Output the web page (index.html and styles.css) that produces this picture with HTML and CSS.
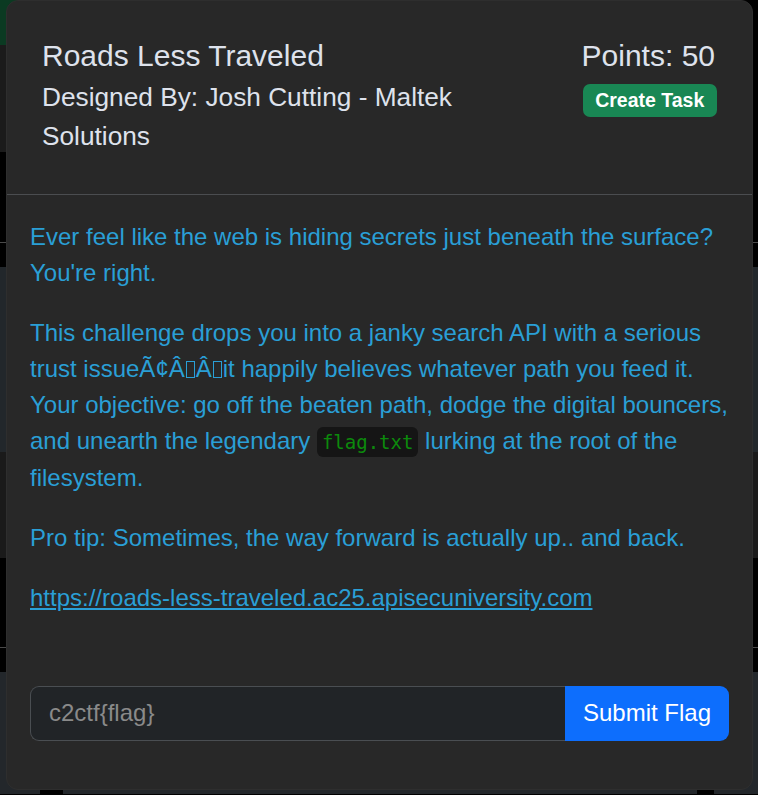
FILE: index.html
```html
<!DOCTYPE html>
<html lang="en">
<head>
<meta charset="utf-8">
<title>Roads Less Traveled</title>
<link rel="stylesheet" href="styles.css">
</head>
<body>
<div class="page">
  <div class="band band-top">
    <div class="nav-green"></div>
  </div>
  <div class="band band-2">
    <div class="left-grey"></div>
  </div>
  <div class="band band-3"></div>
  <div class="rule"></div>
  <div class="band band-4"></div>
  <div class="band band-5"></div>
  <div class="band band-6"></div>
  <div class="band band-7"></div>
  <div class="rule"></div>
  <div class="band band-8"></div>
  <div class="band band-9"></div>
  <div class="band band-10">
    <div class="gap-a"></div>
    <div class="fill"></div>
    <div class="gap-b"></div>
    <div class="fill-r"></div>
  </div>
</div>

<div class="modal">
  <div class="modal-header">
    <div class="head-left">
      <h5 class="title">Roads Less Traveled</h5>
      <div class="author">Designed By: Josh Cutting - Maltek Solutions</div>
    </div>
    <div class="head-right">
      <div class="points">Points: 50</div>
      <span class="badge">Create Task</span>
    </div>
  </div>
  <div class="modal-body">
    <p>Ever feel like the web is hiding secrets just beneath the surface? You're right.</p>
    <p>This challenge drops you into a janky search API with a serious trust issueÃ¢Â<span class="tofu"></span>Â<span class="tofu"></span>it happily believes whatever path you feed it. Your objective: go off the beaten path, dodge the digital bouncers, and unearth the legendary <code>flag.txt</code> lurking at the root of the filesystem.</p>
    <p>Pro tip: Sometimes, the way forward is actually up.. and back.</p>
    <p><a href="#">https://roads-less-traveled.ac25.apisecuniversity.com</a></p>
  </div>
  <div class="modal-footer">
    <form class="input-group">
      <input class="flag-input" type="text" placeholder="c2ctf{flag}">
      <button class="submit" type="button">Submit Flag</button>
    </form>
  </div>
</div>
</body>
</html>
```

FILE: styles.css
```css
* { box-sizing: border-box; }
html, body {
  margin: 0;
  padding: 0;
  background: #000;
  font-family: "Liberation Sans", Arial, sans-serif;
  overflow: hidden;
}
.page {
  width: 758px;
  height: 795px;
  display: flex;
  flex-direction: column;
}
.band { width: 100%; display: flex; }
.band-top { height: 45px; background: #000; }
.nav-green { width: 24px; background: #0b3a22; }
.band-2 { height: 107px; background: #000; }
.left-grey { width: 24px; background: #1b1b1b; }
.band-3 { height: 90px; background: #000; }
.rule { height: 1px; background: #4a4a4a; width: 100%; }
.band-4 { height: 24px; background: #000; }
.band-5 { height: 185px; background: #22272b; }
.band-6 { height: 106px; background: #1a1a1a; }
.band-7 { height: 89px; background: #000; }
.band-8 { height: 24px; background: #000; }
.band-9 { height: 117px; background: #23272b; }
.band-10 { height: 5px; background: #23272b; }
.band-10 .gap-a { width: 40px; }
.band-10 .fill { width: 23px; background: #000; }
.band-10 .gap-b { width: 634px; }
.band-10 .fill-r { width: 17px; background: #000; }

.modal {
  position: absolute;
  left: 6px;
  top: 0;
  width: 747px;
  height: 790px;
  background: #282828;
  border-radius: 12px;
  border: 1px solid #2e2e2e;
  display: flex;
  flex-direction: column;
}
.modal-header {
  display: flex;
  justify-content: space-between;
  align-items: flex-start;
  padding: 37px 35px 37px 35px;
  border-bottom: 1px solid #4b4d50;
}
.head-left { width: 460px; }
.title {
  margin: 0 0 4px;
  font-size: 30px;
  line-height: 36px;
  font-weight: 400;
  color: #dee2ec;
}
.author {
  font-size: 26.25px;
  line-height: 1.5;
  color: #dee2ec;
}
.head-right {
  display: flex;
  flex-direction: column;
  align-items: flex-end;
}
.points {
  font-size: 30px;
  line-height: 36px;
  color: #dee2ec;
  margin-right: 2px;
}
.badge {
  margin-top: 10px;
  display: inline-block;
  font-size: 19.5px;
  font-weight: 700;
  line-height: 1;
  padding: 6.8px 12.7px;
  background: #198754;
  color: #fff;
  border-radius: 7px;
}
.modal-body {
  padding: 24px 23px 24px;
  color: #2a9fd6;
  font-size: 24px;
  line-height: 36px;
}
.modal-body p { margin: 0 0 24px; }
.modal-body a { color: #2a9fd6; text-decoration: underline; }
.tofu {
  display: inline-block;
  width: 9px;
  height: 17px;
  border: 1px solid #2a9fd6;
  margin: 0 1px;
  vertical-align: -1px;
}
code {
  font-family: "DejaVu Sans Mono", "Liberation Mono", monospace;
  font-size: 19px;
  color: #0c8a0c;
  background: #151515;
  padding: 4px 5px;
  border-radius: 6px;
}
.modal-footer {
  padding: 22px 23px 48px;
}
.input-group {
  display: flex;
  margin: 0;
}
.flag-input {
  flex: 1;
  height: 55px;
  background: #212427;
  border: 1px solid #4a4e52;
  border-right: none;
  border-radius: 9px 0 0 9px;
  padding: 0 18px;
  font-family: "Liberation Sans", Arial, sans-serif;
  font-size: 24px;
  color: #dee2e6;
  outline: none;
}
.flag-input::placeholder { color: #8a8a8a; }
.submit {
  height: 55px;
  background: #0d6efd;
  border: none;
  border-radius: 0 9px 9px 0;
  color: #fff;
  font-family: "Liberation Sans", Arial, sans-serif;
  font-size: 24px;
  padding: 0 18px;
}
```
